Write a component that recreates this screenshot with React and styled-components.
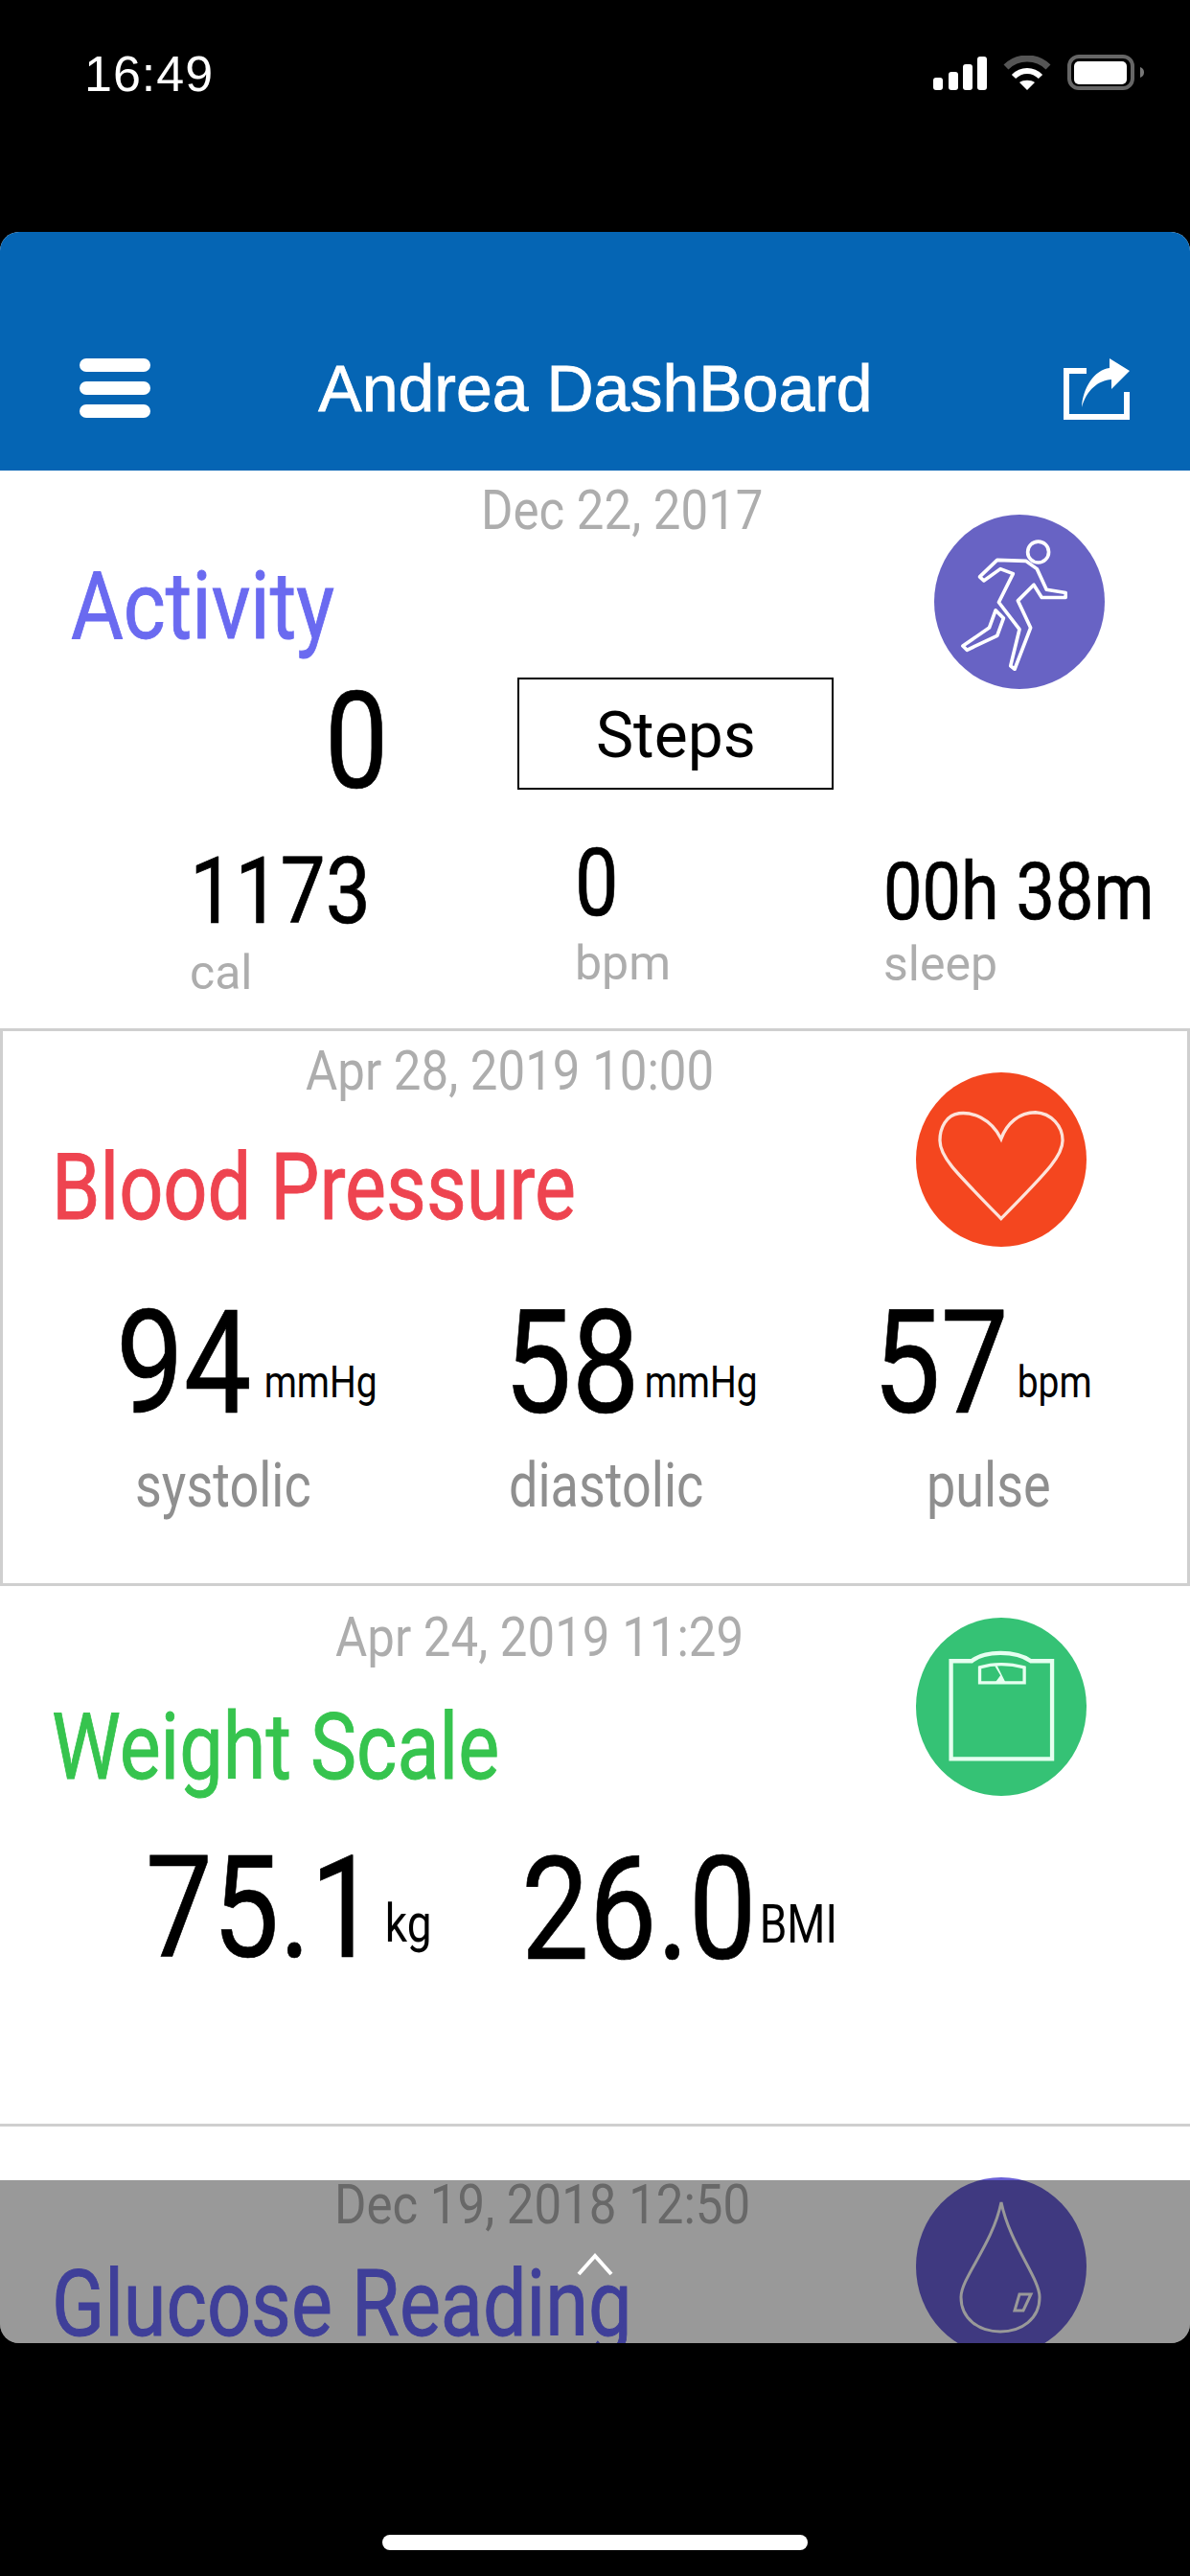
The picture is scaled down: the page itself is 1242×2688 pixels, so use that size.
import React from "react";
import styled, { createGlobalStyle } from "styled-components";

const GlobalStyle = createGlobalStyle`
  html, body {
    margin: 0;
    padding: 0;
    background: #000;
  }
  * {
    box-sizing: border-box;
  }
`;

const Screen = styled.div`
  width: 1242px;
  height: 2688px;
  background: #000;
  display: flex;
  flex-direction: column;
  align-items: center;
  overflow: hidden;
`;

const StatusBar = styled.div`
  width: 100%;
  height: 242px;
  padding: 52px 48px 0 88px;
  display: flex;
  justify-content: space-between;
  align-items: flex-start;
`;

const Clock = styled.div`
  color: #fff;
  font-family: "Liberation Sans", Arial, sans-serif;
  font-size: 52px;
  line-height: 50px;
  letter-spacing: 1px;
`;

const StatusIcons = styled.div`
  display: flex;
  align-items: flex-end;
  gap: 17px;
  padding-top: 5px;
`;

const Frame = styled.div`
  position: relative;
  width: 100%;
  height: 2203px;
  background: #fff;
  border-radius: 20px;
  overflow: hidden;
`;

const Header = styled.header`
  height: 249px;
  padding: 77px 62px 0 83px;
  background: #0565b4;
  display: flex;
  align-items: center;
  justify-content: space-between;
`;

const HeaderTitle = styled.h1`
  margin: 0 24px 0 0;
  color: #fff;
  font-family: "Liberation Sans", Arial, sans-serif;
  font-size: 68px;
  font-weight: 400;
  line-height: 70px;
  -webkit-text-stroke: 0.8px #fff;
`;

const Bars = styled.div`
  width: 74px;
  display: flex;
  flex-direction: column;
  gap: 10px;
`;

const Bar = styled.span`
  display: block;
  height: 14px;
  border-radius: 7px;
  background: #fff;
`;

const Card = styled.section`
  height: ${(p) => p.$height}px;
  border-top: ${(p) => (p.$line ? "3px solid #cfcfcf" : "0")};
  border-left: ${(p) => (p.$box ? "3px solid #cfcfcf" : "0")};
  border-right: ${(p) => (p.$box ? "3px solid #cfcfcf" : "0")};
  overflow: hidden;
`;

const CardHead = styled.div`
  height: ${(p) => p.$height}px;
  padding-right: ${(p) => p.$right}px;
  display: flex;
  justify-content: space-between;
  align-items: flex-start;
`;

const HeadText = styled.div`
  flex: 1;
  display: flex;
  flex-direction: column;
  align-items: flex-start;
`;

const DateLine = styled.div`
  margin: ${(p) => p.$top}px 0 0 ${(p) => p.$left}px;
  color: #adadad;
  font-family: Roboto, sans-serif;
  font-size: 51px;
  line-height: 60px;
  white-space: nowrap;
  transform: scaleY(1.12);
`;

const CardTitle = styled.h2`
  margin: ${(p) => p.$top}px 0 0 ${(p) => p.$left}px;
  color: ${(p) => p.$color};
  font-family: Roboto, sans-serif;
  font-size: ${(p) => p.$size || 81}px;
  font-weight: 400;
  line-height: 100px;
  white-space: nowrap;
  transform: scaleY(1.18);
  -webkit-text-stroke: 0.8px ${(p) => p.$color};
`;

const Badge = styled.div`
  flex: none;
  width: 178px;
  height: ${(p) => p.$height}px;
  margin-top: ${(p) => p.$top}px;
  border-radius: 50%;
  background: ${(p) => p.$color};
  svg {
    display: block;
    width: 100%;
    height: 100%;
  }
`;

const StepsRow = styled.div`
  height: 117px;
  padding-left: 339px;
  display: flex;
  align-items: center;
  gap: 135px;
`;

const BigZero = styled.div`
  margin-top: 18px;
  color: #000;
  font-family: Roboto, sans-serif;
  font-size: 118px;
  line-height: 117px;
  transform: scaleY(1.2);
  -webkit-text-stroke: 0.6px #000;
`;

const StepsBox = styled.div`
  width: 330px;
  height: 117px;
  border: 2px solid #000;
  display: flex;
  align-items: center;
  justify-content: center;
  color: #000;
  font-family: Roboto, sans-serif;
  font-size: 66px;
  padding-top: 4px;
`;

const StatGrid = styled.div`
  margin-top: 50px;
  padding-left: 198px;
  display: grid;
  grid-template-columns: 402px 322px auto;
  align-items: start;
`;

const Stat = styled.div`
  display: flex;
  flex-direction: column;
  align-items: flex-start;
`;

const StatValue = styled.div`
  margin-top: ${(p) => p.$top || 0}px;
  color: #000;
  font-family: Roboto, sans-serif;
  font-size: ${(p) => p.$size}px;
  line-height: 90px;
  white-space: nowrap;
  transform: scaleY(${(p) => p.$stretch});
  -webkit-text-stroke: 0.6px #000;
`;

const StatLabel = styled.div`
  margin-top: ${(p) => p.$top || 0}px;
  color: #adadad;
  font-family: Roboto, sans-serif;
  font-size: 50px;
  line-height: 60px;
`;

const ReadingRow = styled.div`
  padding-left: ${(p) => p.$left}px;
  display: grid;
  grid-template-columns: ${(p) => p.$columns};
`;

const Reading = styled.div`
  display: flex;
  flex-direction: column;
  align-items: flex-start;
`;

const ValueLine = styled.div`
  margin-top: ${(p) => p.$top || 0}px;
  display: flex;
  align-items: baseline;
  gap: ${(p) => p.$gap}px;
  color: #000;
  font-family: Roboto, sans-serif;
  line-height: 130px;
  transform: scaleY(1.19);
  white-space: nowrap;
`;

const Value = styled.span`
  font-size: ${(p) => p.$size || 126}px;
  -webkit-text-stroke: 0.6px #000;
`;

const Unit = styled.span`
  font-size: ${(p) => p.$size || 39}px;
  transform: translateY(-14px);
`;

const ReadingLabel = styled.div`
  margin: 0 0 0 ${(p) => p.$left}px;
  color: #8f8f8f;
  font-family: Roboto, sans-serif;
  font-size: 54px;
  line-height: 60px;
  transform: scaleY(1.19);
`;

const Dimmer = styled.div`
  position: absolute;
  left: 0;
  right: 0;
  bottom: 0;
  height: 170px;
  background: rgba(0, 0, 0, 0.4);
  display: flex;
  justify-content: center;
  padding-top: 76px;
`;

const HomeRow = styled.div`
  height: 243px;
  padding-top: 200px;
`;

const HomeBar = styled.div`
  width: 444px;
  height: 16px;
  border-radius: 8px;
  background: #fff;
`;

const SignalIcon = () => (
  <svg width="56" height="36" viewBox="0 0 56 36" fill="#fff">
    <rect x="0" y="23" width="10" height="13" rx="3" />
    <rect x="16" y="17" width="10" height="19" rx="3" />
    <rect x="31" y="9" width="10" height="27" rx="3" />
    <rect x="46" y="1" width="10" height="35" rx="3" />
  </svg>
);

const WifiIcon = () => (
  <svg width="50" height="36" viewBox="0 0 50 36" fill="none">
    <path d="M3 12 C15 0 35 0 47 12" stroke="#555" strokeWidth="7" />
    <path d="M11 22 C19 14 31 14 39 22" stroke="#fff" strokeWidth="6" />
    <path d="M17 28 C21 25 29 25 33 28 L25 36 Z" fill="#fff" />
  </svg>
);

const BatteryIcon = () => (
  <svg width="80" height="37" viewBox="0 0 80 37">
    <rect x="2" y="2" width="66" height="33" rx="10" fill="none" stroke="#666" strokeWidth="4" />
    <rect x="7" y="7" width="55" height="24" rx="5" fill="#fff" />
    <path d="M76 13 C79 14 80 16 80 18.5 C80 21 79 23 76 24 Z" fill="#777" />
  </svg>
);

const ShareIcon = () => (
  <svg width="70" height="65" viewBox="0 0 70 65">
    <path d="M24 14 H3 V62 H66 V36" fill="none" stroke="#fff" strokeWidth="6" />
    <path d="M48 1 L69 14 L50 33 V23 C36 24 24 34 19 52 C20 32 32 13 48 11 Z" fill="#fff" />
  </svg>
);

const RunnerIcon = () => (
  <svg viewBox="222 80 536 547" fill="none" stroke="#fff" strokeWidth="11" strokeLinejoin="round">
    <circle cx="549" cy="197" r="33" />
    <path d="M365 275 L420 222 L510 225 L545 250 L575 315 L635 325 L635 340 L560 340 L535 300 L485 350 L525 435 L475 565 L462 555 L490 440 L425 355 L470 265 L430 250 L378 287 Z" />
    <path d="M415 380 L440 405 L420 460 L325 505 L312 492 L395 435 Z" />
  </svg>
);

const HeartIcon = () => (
  <svg viewBox="165 88 535 544" fill="none" stroke="#fde3da" strokeWidth="10">
    <path d="M432 295 C400 230 340 210 300 215 C260 220 240 260 240 300 C240 350 280 390 432 545 C590 385 625 345 625 300 C625 255 590 215 540 212 C490 212 450 245 432 295 Z" />
  </svg>
);

const ScaleIcon = () => (
  <svg viewBox="165 55 535 557" fill="none" stroke="#e6fff0" strokeWidth="13">
    <path d="M275 190 H340 Q370 165 430 165 Q490 165 525 190 H592 V497 H275 Z" />
    <path d="M365 210 Q430 190 505 210 V258 H365 Z" strokeWidth="10" />
    <path d="M412 205 L420 205 L445 255 L415 255 L430 235 Z" fill="#e6fff0" stroke="none" />
  </svg>
);

const DropIcon = () => (
  <svg viewBox="0 0 178 186" fill="none" stroke="#fff" strokeWidth="3">
    <path d="M89 26 C80 70 47 105 47 125 C47 148 66 161 88 161 C110 161 129 148 129 125 C129 105 98 70 89 26 Z" />
    <path d="M108 122 H120 L112 139 H103 Z" />
  </svg>
);

const Chevron = () => (
  <svg width="38" height="24" viewBox="0 0 38 24" fill="none" stroke="#fff" strokeWidth="4">
    <path d="M2 22 L19 3 L36 22" />
  </svg>
);

export default function App() {
  return (
    <Screen>
      <GlobalStyle />
      <StatusBar>
        <Clock>16:49</Clock>
        <StatusIcons>
          <SignalIcon />
          <WifiIcon />
          <BatteryIcon />
        </StatusIcons>
      </StatusBar>

      <Frame>
        <Header>
          <Bars>
            <Bar />
            <Bar />
            <Bar />
          </Bars>
          <HeaderTitle>Andrea DashBoard</HeaderTitle>
          <ShareIcon />
        </Header>

        <Card $height={582}>
          <CardHead $height={216} $right={89}>
            <HeadText>
              <DateLine $top={12} $left={502}>Dec 22, 2017</DateLine>
              <CardTitle $top={20} $left={74} $size={84} $color="#6a6af0">Activity</CardTitle>
            </HeadText>
            <Badge $height={182} $top={46} $color="#6863c4">
              <RunnerIcon />
            </Badge>
          </CardHead>
          <StepsRow>
            <BigZero>0</BigZero>
            <StepsBox>Steps</StepsBox>
          </StepsRow>
          <StatGrid>
            <Stat>
              <StatValue $size={84} $stretch={1.14} $top={12}>1173</StatValue>
              <StatLabel $top={9}>cal</StatLabel>
            </Stat>
            <Stat>
              <StatValue $size={81} $stretch={1.215} $top={3}>0</StatValue>
              <StatLabel $top={8}>bpm</StatLabel>
            </Stat>
            <Stat>
              <StatValue $size={72} $stretch={1.17} $top={12}>00h 38m</StatValue>
              <StatLabel>sleep</StatLabel>
            </Stat>
          </StatGrid>
        </Card>

        <Card $height={579} $line $box>
          <CardHead $height={270} $right={105}>
            <HeadText>
              <DateLine $top={12} $left={316}>Apr 28, 2019 10:00</DateLine>
              <CardTitle $top={42} $left={51} $color="#ee4450">Blood Pressure</CardTitle>
            </HeadText>
            <Badge $height={182} $top={43} $color="#f4461f">
              <HeartIcon />
            </Badge>
          </CardHead>
          <ReadingRow $left={118} $columns="405px 385px auto">
            <Reading>
              <ValueLine $gap={13} $top={15}>
                <Value>94</Value>
                <Unit>mmHg</Unit>
              </ValueLine>
              <ReadingLabel $left={20}>systolic</ReadingLabel>
            </Reading>
            <Reading>
              <ValueLine $gap={5} $top={15}>
                <Value>58</Value>
                <Unit>mmHg</Unit>
              </ValueLine>
              <ReadingLabel $left={5}>diastolic</ReadingLabel>
            </Reading>
            <Reading>
              <ValueLine $gap={9} $top={15}>
                <Value>57</Value>
                <Unit>bpm</Unit>
              </ValueLine>
              <ReadingLabel $left={56}>pulse</ReadingLabel>
            </Reading>
          </ReadingRow>
        </Card>

        <Card $height={564} $line>
          <CardHead $height={270} $right={108}>
            <HeadText>
              <DateLine $top={24} $left={350}>Apr 24, 2019 11:29</DateLine>
              <CardTitle $top={35} $left={54} $color="#36c44e">Weight Scale</CardTitle>
            </HeadText>
            <Badge $height={186} $top={33} $color="#35c275">
              <ScaleIcon />
            </Badge>
          </CardHead>
          <ReadingRow $left={152} $columns="392px auto">
            <ValueLine $gap={8} $top={5}>
              <Value $size={124}>75.1</Value>
              <Unit $size={46}>kg</Unit>
            </ValueLine>
            <ValueLine $gap={3} $top={5}>
              <Value>26.0</Value>
              <Unit $size={46}>BMI</Unit>
            </ValueLine>
          </ReadingRow>
        </Card>

        <Card $height={300} $line>
          <CardHead $height={270} $right={108}>
            <HeadText>
              <DateLine $top={52} $left={349}>Dec 19, 2018 12:50</DateLine>
              <CardTitle $top={24} $left={54} $color="#6969ff">Glucose Reading</CardTitle>
            </HeadText>
            <Badge $height={186} $top={53} $color="#6a60d6">
              <DropIcon />
            </Badge>
          </CardHead>
        </Card>

        <Dimmer>
          <Chevron />
        </Dimmer>
      </Frame>

      <HomeRow>
        <HomeBar />
      </HomeRow>
    </Screen>
  );
}
